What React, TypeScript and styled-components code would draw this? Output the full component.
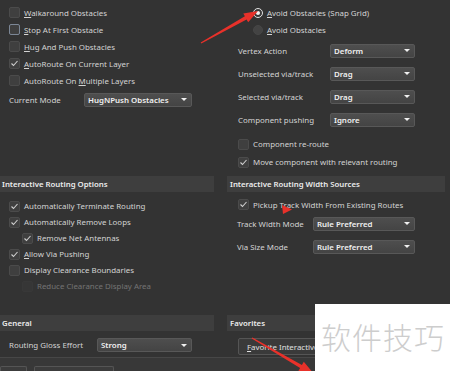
import React from 'react';
import styled, { createGlobalStyle } from 'styled-components';

const GlobalStyle = createGlobalStyle`
  html, body { margin: 0; padding: 0; background: #333333; }
  body { font-family: "Noto Sans", "Open Sans", sans-serif; }
  #root { width: 450px; height: 371px; }
`;

const Page = styled.div`
  position: relative;
  width: 450px;
  height: 371px;
  overflow: hidden;
  background: #333333;
  display: grid;
  grid-template-columns: 214px 218px;
  grid-template-rows: 176px 16px 123px 16px 26px 1fr;
  column-gap: 13px;
  color: #d4d4d4;
  font-size: 7.9px;
`;

const Panel = styled.div<{ $pt?: number; $pl?: number }>`
  display: flex;
  flex-direction: column;
  padding-top: ${(p) => p.$pt ?? 0}px;
  padding-left: ${(p) => p.$pl ?? 0}px;
  min-width: 0;
`;

const Header = styled.div<{ $pl?: number }>`
  display: flex;
  align-items: center;
  background: #3e3e3e;
  color: #ececec;
  font-weight: 600;
  font-size: 7.8px;
  padding-left: ${(p) => p.$pl ?? 2}px;
  white-space: nowrap;
`;

const Row = styled.div<{ $h: number; $indent?: number; $mt?: number }>`
  display: flex;
  align-items: center;
  height: ${(p) => p.$h}px;
  padding-left: ${(p) => p.$indent ?? 0}px;
  margin-top: ${(p) => p.$mt ?? 0}px;
  white-space: nowrap;
`;

const Box = styled.span<{ $focus?: boolean; $disabled?: boolean }>`
  box-sizing: border-box;
  width: 11px;
  height: 11px;
  flex: none;
  border-radius: 2px;
  border: 1px solid ${(p) => (p.$focus ? '#7c8796' : p.$disabled ? '#383838' : '#4b4b4b')};
  background: ${(p) => (p.$disabled ? '#363636' : '#3f3f3f')};
  display: flex;
  align-items: center;
  justify-content: center;
`;

const Text = styled.span<{ $disabled?: boolean; $gap?: number }>`
  margin-left: ${(p) => p.$gap ?? 4}px;
  color: ${(p) => (p.$disabled ? '#737373' : '#d4d4d4')};
`;

const RadioDot = styled.span<{ $on?: boolean }>`
  box-sizing: border-box;
  width: 10px;
  height: 10px;
  flex: none;
  border-radius: 50%;
  border: ${(p) => (p.$on ? '1.5px solid #e2e2e2' : '1px solid #474747')};
  background: ${(p) => (p.$on ? '#3a3a3a' : '#434343')};
  display: flex;
  align-items: center;
  justify-content: center;
  &::after {
    content: '';
    display: ${(p) => (p.$on ? 'block' : 'none')};
    width: 4px;
    height: 4px;
    border-radius: 50%;
    background: #f2f2f2;
  }
`;

const FieldLabel = styled.span<{ $w: number }>`
  width: ${(p) => p.$w}px;
  flex: none;
  color: #d4d4d4;
`;

const Select = styled.div<{ $w: number }>`
  box-sizing: border-box;
  width: ${(p) => p.$w}px;
  height: 14px;
  border: 1px solid #585858;
  border-radius: 2px;
  background: linear-gradient(#4e4e4e, #444444);
  color: #f0f0f0;
  font-weight: 600;
  display: flex;
  align-items: center;
  justify-content: space-between;
  padding: 0 4px 0 3px;
  &::after {
    content: '';
    width: 0;
    height: 0;
    border-left: 3px solid transparent;
    border-right: 3px solid transparent;
    border-top: 3px solid #f0f0f0;
  }
`;

const FavButton = styled.div`
  box-sizing: border-box;
  width: 140px;
  height: 17px;
  margin-left: 11px;
  border: 1px solid #555555;
  border-radius: 2px;
  background: #3a3a3a;
  color: #e0e0e0;
  display: flex;
  align-items: center;
  padding-left: 8px;
  white-space: nowrap;
`;

const Footer = styled.div`
  grid-column: 1 / -1;
  border-top: 1px solid #474747;
  background: #383838;
  display: flex;
  gap: 7px;
  padding-top: 8px;
`;

const FooterBtn = styled.div<{ $w: number }>`
  width: ${(p) => p.$w}px;
  height: 10px;
  border: 1px solid #555;
  border-bottom: none;
  border-radius: 2px 2px 0 0;
  background: #3c3c3c;
`;

const Overlay = styled.svg`
  position: absolute;
  left: 0;
  top: 0;
  pointer-events: none;
`;

const Watermark = styled.div`
  position: absolute;
  left: 315px;
  top: 304px;
  width: 135px;
  height: 67px;
  background: #ffffff;
  color: #cdcdcd;
  font-family: "Noto Sans CJK SC", "Noto Sans", sans-serif;
  font-size: 30px;
  font-weight: 300;
  letter-spacing: 1px;
  padding-left: 6px;
  padding-top: 10px;
  box-sizing: border-box;
  white-space: nowrap;
  line-height: 44px;
`;

const Check = () => (
  <svg width="9" height="9" viewBox="0 0 9 9">
    <polyline points="1.5,4.5 3.5,6.5 7.5,2" fill="none" stroke="#cfcfcf" strokeWidth="1.1" />
  </svg>
);

type CBProps = { label: React.ReactNode; checked?: boolean; focus?: boolean; disabled?: boolean; h: number; indent: number; mt?: number };
const CheckBox = ({ label, checked, focus, disabled, h, indent, mt }: CBProps) => (
  <Row $h={h} $indent={indent} $mt={mt}>
    <Box $focus={focus} $disabled={disabled}>{checked && <Check />}</Box>
    <Text $disabled={disabled}>{label}</Text>
  </Row>
);

const Field = ({ label, value, lw, sw, h, indent, mt }: { label: string; value: string; lw: number; sw: number; h: number; indent: number; mt?: number }) => (
  <Row $h={h} $indent={indent} $mt={mt}>
    <FieldLabel $w={lw}>{label}</FieldLabel>
    <Select $w={sw}>{value}</Select>
  </Row>
);

function arrow(x1: number, y1: number, x2: number, y2: number, headLen: number, headW: number, tailW: number, neckW: number) {
  const dx = x2 - x1;
  const dy = y2 - y1;
  const L = Math.hypot(dx, dy);
  const ux = dx / L;
  const uy = dy / L;
  const nx = -uy;
  const ny = ux;
  const bx = x2 - ux * headLen;
  const by = y2 - uy * headLen;
  const p = (x: number, y: number) => `${x.toFixed(1)},${y.toFixed(1)}`;
  return [
    p(x1 + nx * tailW / 2, y1 + ny * tailW / 2),
    p(bx + nx * neckW / 2, by + ny * neckW / 2),
    p(bx + nx * headW / 2, by + ny * headW / 2),
    p(x2, y2),
    p(bx - nx * headW / 2, by - ny * headW / 2),
    p(bx - nx * neckW / 2, by - ny * neckW / 2),
    p(x1 - nx * tailW / 2, y1 - ny * tailW / 2),
  ].join(' ');
}

export default function App() {
  return (
    <>
      <GlobalStyle />
      <Page>
        <Panel $pt={4}>
          <CheckBox h={17} indent={9} label={<><u>W</u>alkaround Obstacles</>} />
          <CheckBox h={17} indent={9} focus label={<><u>S</u>top At First Obstacle</>} />
          <CheckBox h={17} indent={9} label={<><u>H</u>ug And Push Obstacles</>} />
          <CheckBox h={17} indent={9} checked label={<><u>A</u>utoRoute On Current Layer</>} />
          <CheckBox h={17} indent={9} label={<>AutoRoute On <u>M</u>ultiple Layers</>} />
          <Field h={19} indent={9} mt={1} lw={75} sw={108} label="Current Mode" value="HugNPush Obstacles" />
        </Panel>
        <Panel $pt={4}>
          <Row $h={17} $indent={26}>
            <RadioDot $on />
            <Text><u>A</u>void Obstacles (Snap Grid)</Text>
          </Row>
          <Row $h={17} $indent={26}>
            <RadioDot />
            <Text><u>A</u>void Obstacles</Text>
          </Row>
          <Field h={23} indent={11} mt={1} lw={92} sw={85} label="Vertex Action" value="Deform" />
          <Field h={23} indent={11} lw={92} sw={85} label="Unselected via/track" value="Drag" />
          <Field h={23} indent={11} lw={92} sw={85} label="Selected via/track" value="Drag" />
          <Field h={23} indent={11} lw={92} sw={85} label="Component pushing" value="Ignore" />
          <CheckBox h={18} indent={11} mt={4} label="Component re-route" />
          <CheckBox h={18} indent={11} checked label="Move component with relevant routing" />
        </Panel>

        <Header>Interactive Routing Options</Header>
        <Header $pl={3}>Interactive Routing Width Sources</Header>

        <Panel $pt={6}>
          <CheckBox h={16} indent={9} checked label="Automatically Terminate Routing" />
          <CheckBox h={16} indent={9} checked label="Automatically Remove Loops" />
          <CheckBox h={16} indent={22} checked label="Remove Net Antennas" />
          <CheckBox h={16} indent={9} checked label={<><u>A</u>llow Via Pushing</>} />
          <CheckBox h={16} indent={9} label="Display Clearance Boundaries" />
          <CheckBox h={16} indent={22} disabled label="Reduce Clearance Display Area" />
        </Panel>
        <Panel $pt={5}>
          <CheckBox h={15} indent={11} checked label="Pickup Track Width From Existing Routes" />
          <Field h={23} indent={10} lw={76} sw={102} label="Track Width Mode" value="Rule Preferred" />
          <Field h={23} indent={10} lw={76} sw={102} label="Via Size Mode" value="Rule Preferred" />
        </Panel>

        <Header>General</Header>
        <Header $pl={3}>Favorites</Header>

        <Panel $pt={5}>
          <Field h={18} indent={9} lw={88} sw={95} label="Routing Gloss Effort" value="Strong" />
        </Panel>
        <Panel $pt={7}>
          <FavButton><span><u>F</u>avorite Interactive Routing</span></FavButton>
        </Panel>

        <Footer>
          <FooterBtn $w={25} />
          <FooterBtn $w={78} />
        </Footer>

        <Overlay width="450" height="371" viewBox="0 0 450 371">
          <polygon points={arrow(201, 43, 258, 11, 14, 10, 1.2, 3.5)} fill="#e8312a" />
          <polygon points="282,205 292,209.5 283,214" fill="#e8312a" />
          <polygon points={arrow(252, 338, 314, 374, 15, 11, 1.2, 3.5)} fill="#e8312a" />
        </Overlay>
        <Watermark>软件技巧</Watermark>
      </Page>
    </>
  );
}
